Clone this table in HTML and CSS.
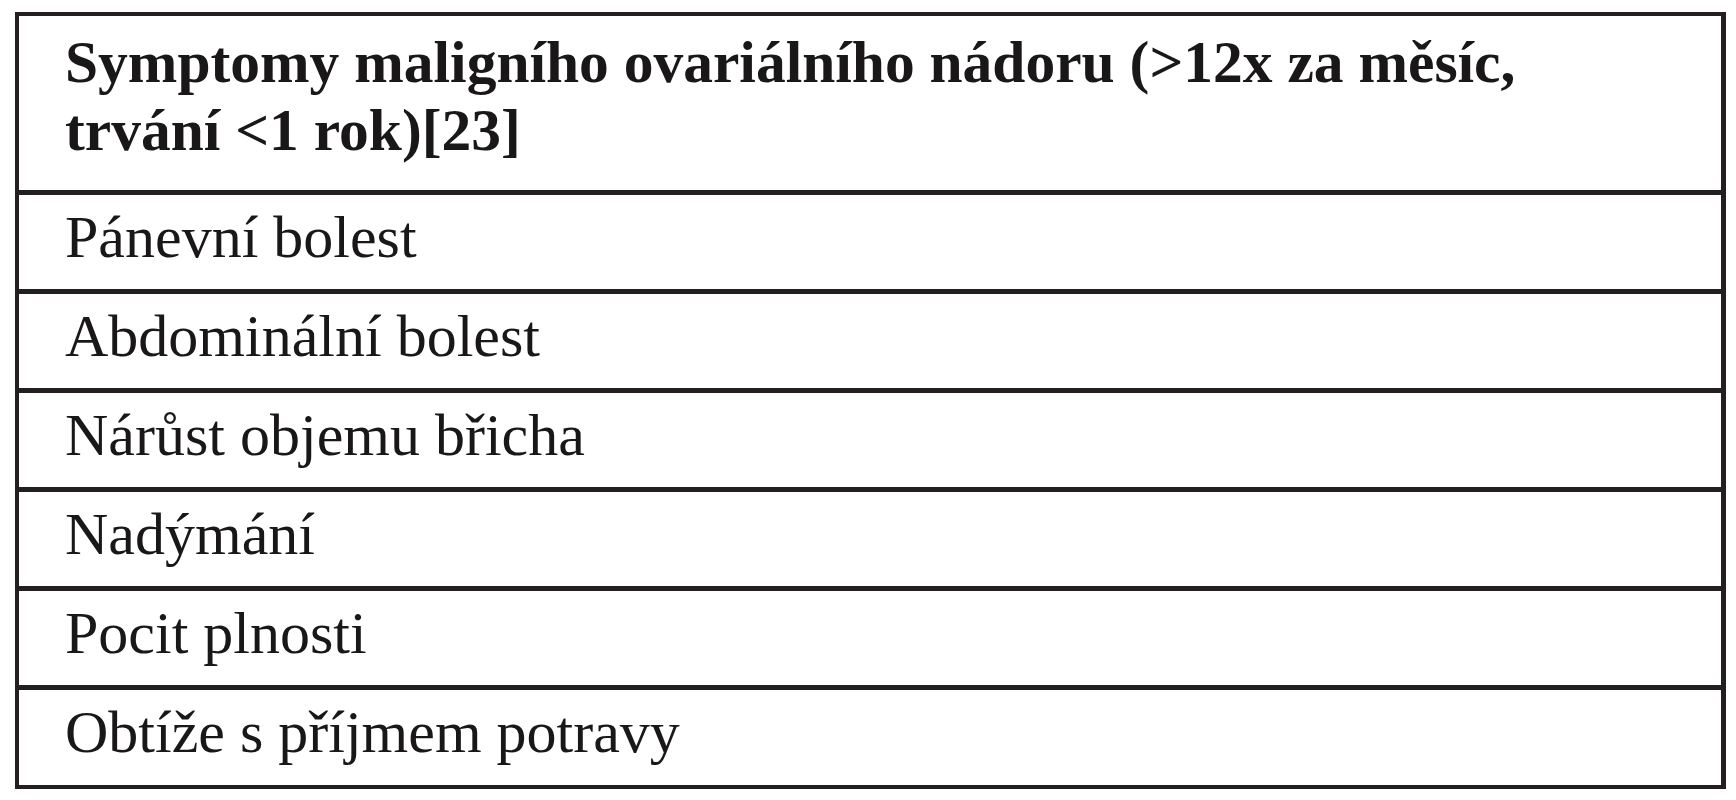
FILE: index.html
```html
<!DOCTYPE html>
<html lang="cs">
<head>
<meta charset="utf-8">
<title>Symptomy</title>
<link rel="stylesheet" href="styles.css">
</head>
<body>
<div class="table">
  <div class="cell head">Symptomy maligního ovariálního nádoru (&gt;12x za měsíc,<br>trvání &lt;1 rok)[23]</div>
  <div class="cell">Pánevní bolest</div>
  <div class="cell">Abdominální bolest</div>
  <div class="cell">Nárůst objemu břicha</div>
  <div class="cell">Nadýmání</div>
  <div class="cell">Pocit plnosti</div>
  <div class="cell last">Obtíže s příjmem potravy</div>
</div>
</body>
</html>
```
FILE: styles.css
```css
html, body {
  margin: 0;
  padding: 0;
  background: #ffffff;
}
body {
  padding: 12px 0 0 15px;
  font-family: "Liberation Serif", "Times New Roman", serif;
  color: #1a1718;
}
.table {
  width: 1711px;
  box-sizing: border-box;
  border: 4px solid #231f20;
  border-right-width: 5px;
}
.cell {
  box-sizing: border-box;
  height: 99px;
  border-bottom: 5px solid #231f20;
  padding: 12px 0 0 46px;
  font-size: 60px;
  line-height: 60px;
  white-space: nowrap;
}
.cell.last {
  border-bottom: none;
  height: 95px;
}
.cell.head {
  height: 179px;
  padding-top: 12px;
  font-size: 59.5px;
  line-height: 68px;
  font-weight: bold;
}
```
